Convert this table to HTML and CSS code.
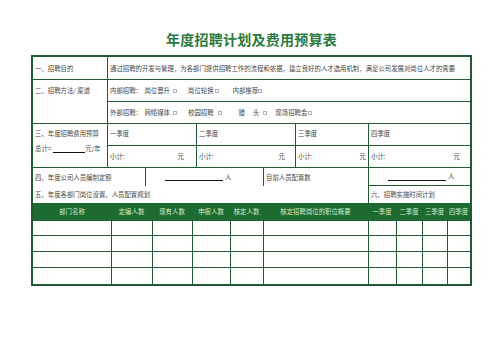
FILE: index.html
```html
<!DOCTYPE html>
<html lang="zh">
<head>
<meta charset="utf-8">
<title>年度招聘计划及费用预算表</title>
<link rel="stylesheet" href="styles.css">
</head>
<body>
<h1 class="title">年度招聘计划及费用预算表</h1>
<div class="sheet">
  <div class="sec sec-a">
    <div class="c lbl bb">一、招聘目的</div>
    <div class="c bl bb">通过招聘的开发与管理，为各部门提供招聘工作的流程和依据，建立良好的人才选用机制，满足公司发展对岗位人才的需要</div>
    <div class="c lbl bb span2 top">二、招聘方法/ 渠道</div>
    <div class="c bl bb">
      <span>内部招聘：</span><span class="m2">岗位晋升</span><span class="box m3"></span><span class="m11">岗位轮换</span><span class="box m1"></span><span class="m14">内部推荐</span><span class="box m0"></span>
    </div>
    <div class="c bl bb">
      <span>外部招聘：</span><span class="m2">网络媒体</span><span class="box m3"></span><span class="m11">校园招聘</span><span class="box m4"></span><span class="m17">猎</span><span class="m9">头</span><span class="box m4"></span><span class="m8">现场招聘会</span><span class="box m1"></span>
    </div>
  </div>
  <div class="sec sec-b">
    <div class="c lbl bb span2 col">
      <span class="l1">三、年度招聘费用预算</span>
      <span class="l2">总计= <span class="uline u32"></span>元/年</span>
    </div>
    <div class="c bl bb q">一季度</div>
    <div class="c bl bb q">二季度</div>
    <div class="c bl bb q">三季度</div>
    <div class="c bl bb q">四季度</div>
    <div class="c bl bb sub pr13"><span>小计:</span><span>元</span></div>
    <div class="c bl bb sub pr11"><span>小计:</span><span>元</span></div>
    <div class="c bl bb sub pr2"><span>小计:</span><span>元</span></div>
    <div class="c bl bb sub pr10"><span>小计:</span><span>元</span></div>
  </div>
  <div class="sec sec-c">
    <div class="c lbl">四、年度公司人员编制定额</div>
    <div class="c bl"><span class="uline u58 ml19"></span><span class="ren">人</span></div>
    <div class="c bl">目前人员配置数</div>
    <div class="c bl bb"><span class="uline u58 ml19"></span><span class="ren">人</span></div>
  </div>
  <div class="sec sec-d">
    <div class="c lbl">五、年度各部门岗位设置、人员配置规划</div>
    <div class="c bl">六、招聘实施时间计划</div>
  </div>
  <div class="sec sec-e">
    <div class="c h">部门名称</div>
    <div class="c h">定编人数</div>
    <div class="c h">现有人数</div>
    <div class="c h">申报人数</div>
    <div class="c h">核定人数</div>
    <div class="c h">核定招聘岗位的职位概要</div>
    <div class="c h">一季度</div>
    <div class="c h">二季度</div>
    <div class="c h">三季度</div>
    <div class="c h">四季度</div>

    <div class="c d bb"></div><div class="c d bl bb"></div><div class="c d bl bb"></div><div class="c d bl bb"></div><div class="c d bl bb"></div><div class="c d bl bb"></div><div class="c d bl bb"></div><div class="c d bl bb"></div><div class="c d bl bb"></div><div class="c d bl bb"></div>
    <div class="c d bb"></div><div class="c d bl bb"></div><div class="c d bl bb"></div><div class="c d bl bb"></div><div class="c d bl bb"></div><div class="c d bl bb"></div><div class="c d bl bb"></div><div class="c d bl bb"></div><div class="c d bl bb"></div><div class="c d bl bb"></div>
    <div class="c d bb"></div><div class="c d bl bb"></div><div class="c d bl bb"></div><div class="c d bl bb"></div><div class="c d bl bb"></div><div class="c d bl bb"></div><div class="c d bl bb"></div><div class="c d bl bb"></div><div class="c d bl bb"></div><div class="c d bl bb"></div>
    <div class="c d"></div><div class="c d bl"></div><div class="c d bl"></div><div class="c d bl"></div><div class="c d bl"></div><div class="c d bl"></div><div class="c d bl"></div><div class="c d bl"></div><div class="c d bl"></div><div class="c d bl"></div>
  </div>
</div>
</body>
</html>
```
FILE: styles.css
```css
* { box-sizing: border-box; }
html, body { margin: 0; padding: 0; background: #fff; }
body {
  font-family: "Noto Sans CJK SC", "Noto Sans", sans-serif;
  color: #474747;
  padding-top: 29px;
}
.title {
  margin: 0 0 6px 0;
  height: 20px;
  line-height: 20px;
  font-size: 14px;
  letter-spacing: 0.25px;
  font-weight: 700;
  color: #2b7a3e;
  text-align: center;
}
.sheet {
  width: 441px;
  margin: 0 auto;
  border: 2px solid #1f5a32;
}
.sec { display: grid; }
.sec-a {
  grid-template-columns: 74px 363px;
  grid-template-rows: 23px 22px 22px;
}
.sec-b {
  grid-template-columns: 74px 89px 99px 73px 102px;
  grid-template-rows: 22px 22px;
}
.sec-c {
  grid-template-columns: 112px 118px 105px 102px;
  grid-template-rows: 18px;
}
.sec-d {
  grid-template-columns: 335px 102px;
  grid-template-rows: 17px;
}
.sec-e {
  grid-template-columns: 78px 41px 40px 38px 33px 105px 28px 26px 25px 23px;
  grid-template-rows: 18px 15px 16px 16px 16px;
}
.c {
  display: flex;
  align-items: center;
  padding: 0 2px;
  font-size: 6.4px;
  line-height: 9px;
  white-space: nowrap;
  overflow: hidden;
  min-width: 0;
}
.bl { border-left: 1px solid #1f5a32; }
.bb { border-bottom: 1px solid #1f5a32; }
.lbl { padding-left: 2px; }
.span2 { grid-row: span 2; }
.top { align-items: flex-start; padding-top: 5.5px; }
.col {
  flex-direction: column;
  align-items: flex-start;
  justify-content: flex-start;
  padding-top: 4.5px;
}
.l2 { margin-top: 6px; display: flex; align-items: flex-end; }
.uline {
  display: inline-block;
  height: 8px;
  border-bottom: 1px solid #111;
}
.u32 { width: 32px; margin-left: 2px; }
.u58 { width: 58px; }
.ml19 { margin-left: 17px; }
.ren { margin-left: 2px; }
.q { padding-bottom: 2px; }
.sub { justify-content: space-between; }
.pr13 { padding-right: 12px; }
.pr11 { padding-right: 10px; }
.pr2 { padding-right: 2px; }
.pr10 { padding-right: 10px; }

.box {
  display: inline-block;
  width: 4px;
  height: 4px;
  border: 1px solid #b4b4b4;
  background: #fff;
}
.m0 { margin-left: 0; }
.m1 { margin-left: 1px; }
.m2 { margin-left: 2.5px; }
.m3 { margin-left: 3px; }
.m4 { margin-left: 4px; }
.m8 { margin-left: 8px; }
.m9 { margin-left: 8px; }
.m11 { margin-left: 11px; }
.m14 { margin-left: 14px; }
.m17 { margin-left: 17px; }

.h {
  background: #1e6b31;
  color: #cfe8c8;
  justify-content: center;
  padding: 0;
  border-bottom: 1px solid #1f5a32;
}
.d { padding: 0; }
```
